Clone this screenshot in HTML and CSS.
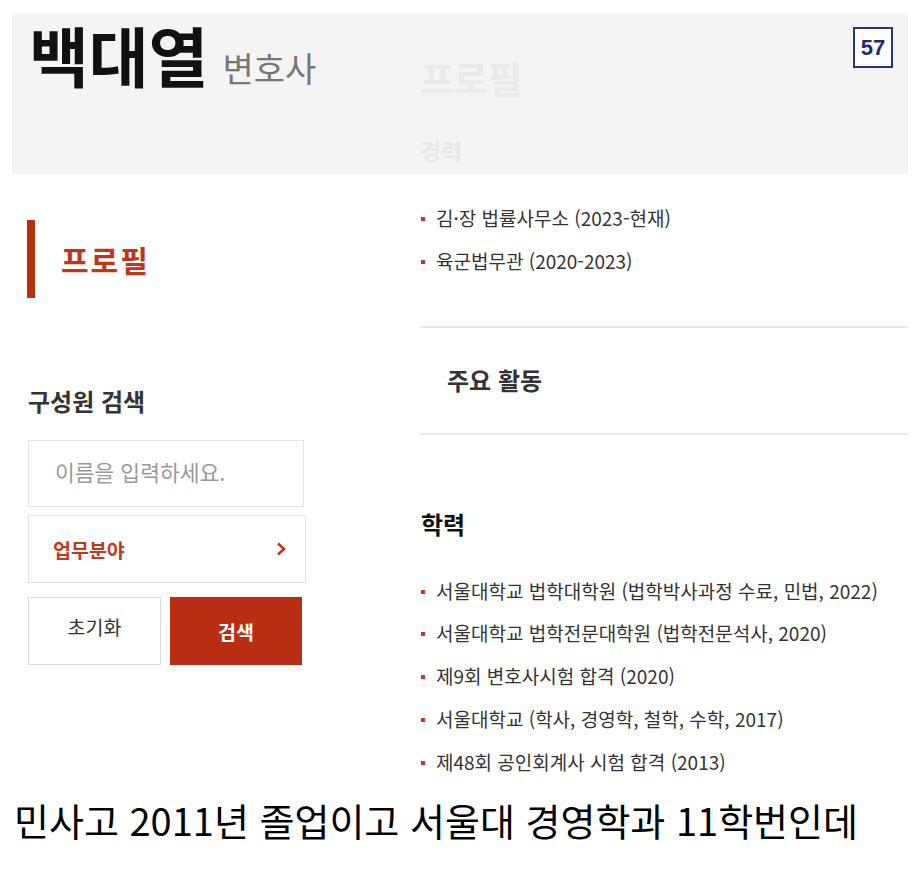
FILE: index.html
```html
<!DOCTYPE html>
<html lang="ko">
<head>
  <meta charset="UTF-8">
  <title>백대열 변호사</title>
  <meta name="viewport" content="width=device-width, initial-scale=1.0">
  <link rel="stylesheet" href="styles.css">
</head>
<body>
  <div class="shot">
    <div class="hero">
      <div class="hero-left">
        <span class="hero-name">백대열</span>
        <span class="hero-title">변호사</span>
      </div>
      <div class="hero-right">
        <div class="ghost-title">프로필</div>
        <div class="ghost-sub">경력</div>
      </div>
      <div class="page-badge">57</div>
    </div>

    <div class="content">
      <div class="sidebar">
        <div class="side-title">프로필</div>

        <div class="search-box">
          <div class="search-title">구성원 검색</div>
          <input class="name-input" type="text" placeholder="이름을 입력하세요.">
          <a href="#" class="field-select">
            <span>업무분야</span>
            <svg width="12" height="16" viewBox="0 0 12 16"><polyline points="3,2.5 9,8 3,13.5" fill="none" stroke="#c0391b" stroke-width="2.6"/></svg>
          </a>
          <div class="search-buttons">
            <button class="reset-button">초기화</button>
            <button class="search-button">검색</button>
          </div>
        </div>
      </div>

      <div class="main">
        <ul class="info-list">
          <li>김·장 법률사무소 (2023-현재)</li>
          <li>육군법무관 (2020-2023)</li>
        </ul>

        <div class="accordion">주요 활동</div>

        <h3 class="section-title">학력</h3>
        <ul class="info-list">
          <li>서울대학교 법학대학원 (법학박사과정 수료, 민법, 2022)</li>
          <li>서울대학교 법학전문대학원 (법학전문석사, 2020)</li>
          <li>제9회 변호사시험 합격 (2020)</li>
          <li>서울대학교 (학사, 경영학, 철학, 수학, 2017)</li>
          <li>제48회 공인회계사 시험 합격 (2013)</li>
        </ul>
      </div>
    </div>
  </div>

  <p class="caption">민사고 2011년 졸업이고 서울대 경영학과 11학번인데</p>
</body>
</html>
```

FILE: styles.css
```css
body {
  margin: 0;
  background: #ffffff;
  font-family: "Noto Sans CJK KR", "Noto Sans", sans-serif;
  color: #333;
}

.shot {
  margin: 13px 14px 0 12px;
  width: 896px;
}

.hero {
  position: relative;
  display: flex;
  height: 161px;
  background: #f4f4f4;
}

.hero-left {
  width: 408px;
  padding: 3px 0 0 17px;
  box-sizing: border-box;
  display: flex;
  align-items: baseline;
  gap: 14px;
}

.hero-name {
  font-size: 65px;
  font-weight: bold;
  line-height: 76px;
  color: #111;
}

.hero-title {
  font-size: 34px;
  color: #777;
}

.hero-right {
  padding-top: 40px;
}

.ghost-title {
  font-size: 37px;
  font-weight: bold;
  line-height: 50px;
  color: #eaeaea;
}

.ghost-sub {
  margin-top: 30px;
  font-size: 23px;
  font-weight: bold;
  color: #e8e8e8;
}

.page-badge {
  position: absolute;
  top: 14px;
  right: 15px;
  width: 40px;
  height: 41px;
  box-sizing: border-box;
  border: 2px solid #27357a;
  background: #fff;
  color: #1f2d6e;
  font-family: "Liberation Sans", Arial, sans-serif;
  font-size: 22px;
  font-weight: bold;
  line-height: 37px;
  text-align: center;
}

.content {
  display: flex;
}

.sidebar {
  width: 408px;
  flex-shrink: 0;
  padding-left: 15px;
  box-sizing: border-box;
}

.side-title {
  margin-top: 46px;
  height: 78px;
  border-left: 8px solid #b8300f;
  padding-left: 26px;
  font-size: 30px;
  font-weight: bold;
  line-height: 78px;
  color: #c0361a;
  letter-spacing: 2px;
}

.search-box {
  margin: 88px 0 0 1px;
  width: 278px;
}

.search-title {
  font-size: 24px;
  font-weight: bold;
  line-height: 30px;
  color: #333;
  margin-bottom: 24px;
}

.name-input {
  display: block;
  width: 276px;
  height: 67px;
  box-sizing: border-box;
  border: 1px solid #e3e3e3;
  padding: 0 0 4px 26px;
  font-family: inherit;
  font-size: 21.5px;
  color: #333;
  outline: none;
}

.name-input::placeholder {
  color: #999;
}

.field-select {
  display: flex;
  align-items: center;
  justify-content: space-between;
  margin-top: 8px;
  height: 68px;
  box-sizing: border-box;
  border: 1px solid #e3e3e3;
  padding: 0 18px 0 24px;
  text-decoration: none;
  font-size: 19.5px;
  font-weight: bold;
  color: #c0391b;
}

.search-buttons {
  display: flex;
  gap: 9px;
  margin-top: 14px;
}

.reset-button,
.search-button {
  height: 68px;
  font-family: inherit;
  font-size: 19.5px;
  cursor: pointer;
}

.reset-button {
  width: 133px;
  background: #fff;
  border: 1px solid #d9d9d9;
  color: #333;
  padding-bottom: 10px;
}

.search-button {
  width: 132px;
  background: #b92e12;
  border: none;
  color: #fff;
  font-weight: bold;
}

.main {
  flex-grow: 1;
  padding-top: 23px;
}

.info-list {
  list-style: none;
  margin: 0;
  padding: 0 0 0 1px;
}

.info-list li {
  position: relative;
  padding-left: 15px;
  font-size: 19px;
  line-height: 42.75px;
  color: #333;
}

.info-list li::before {
  content: "";
  position: absolute;
  left: 0;
  top: 20px;
  width: 4px;
  height: 4px;
  background: #c0392b;
}

.accordion {
  margin-top: 43px;
  height: 109px;
  border-top: 2px solid #e6e6e6;
  border-bottom: 2px solid #ececec;
  box-sizing: border-box;
  padding-left: 27px;
  font-size: 24px;
  font-weight: bold;
  line-height: 104px;
  color: #333;
}

.section-title {
  margin: 74px 0 31px 1px;
  font-size: 24px;
  font-weight: bold;
  line-height: 30px;
  color: #111;
}

.caption {
  margin: 12px 0 0 14px;
  font-size: 38px;
  line-height: 50px;
  color: #000;
}
```
